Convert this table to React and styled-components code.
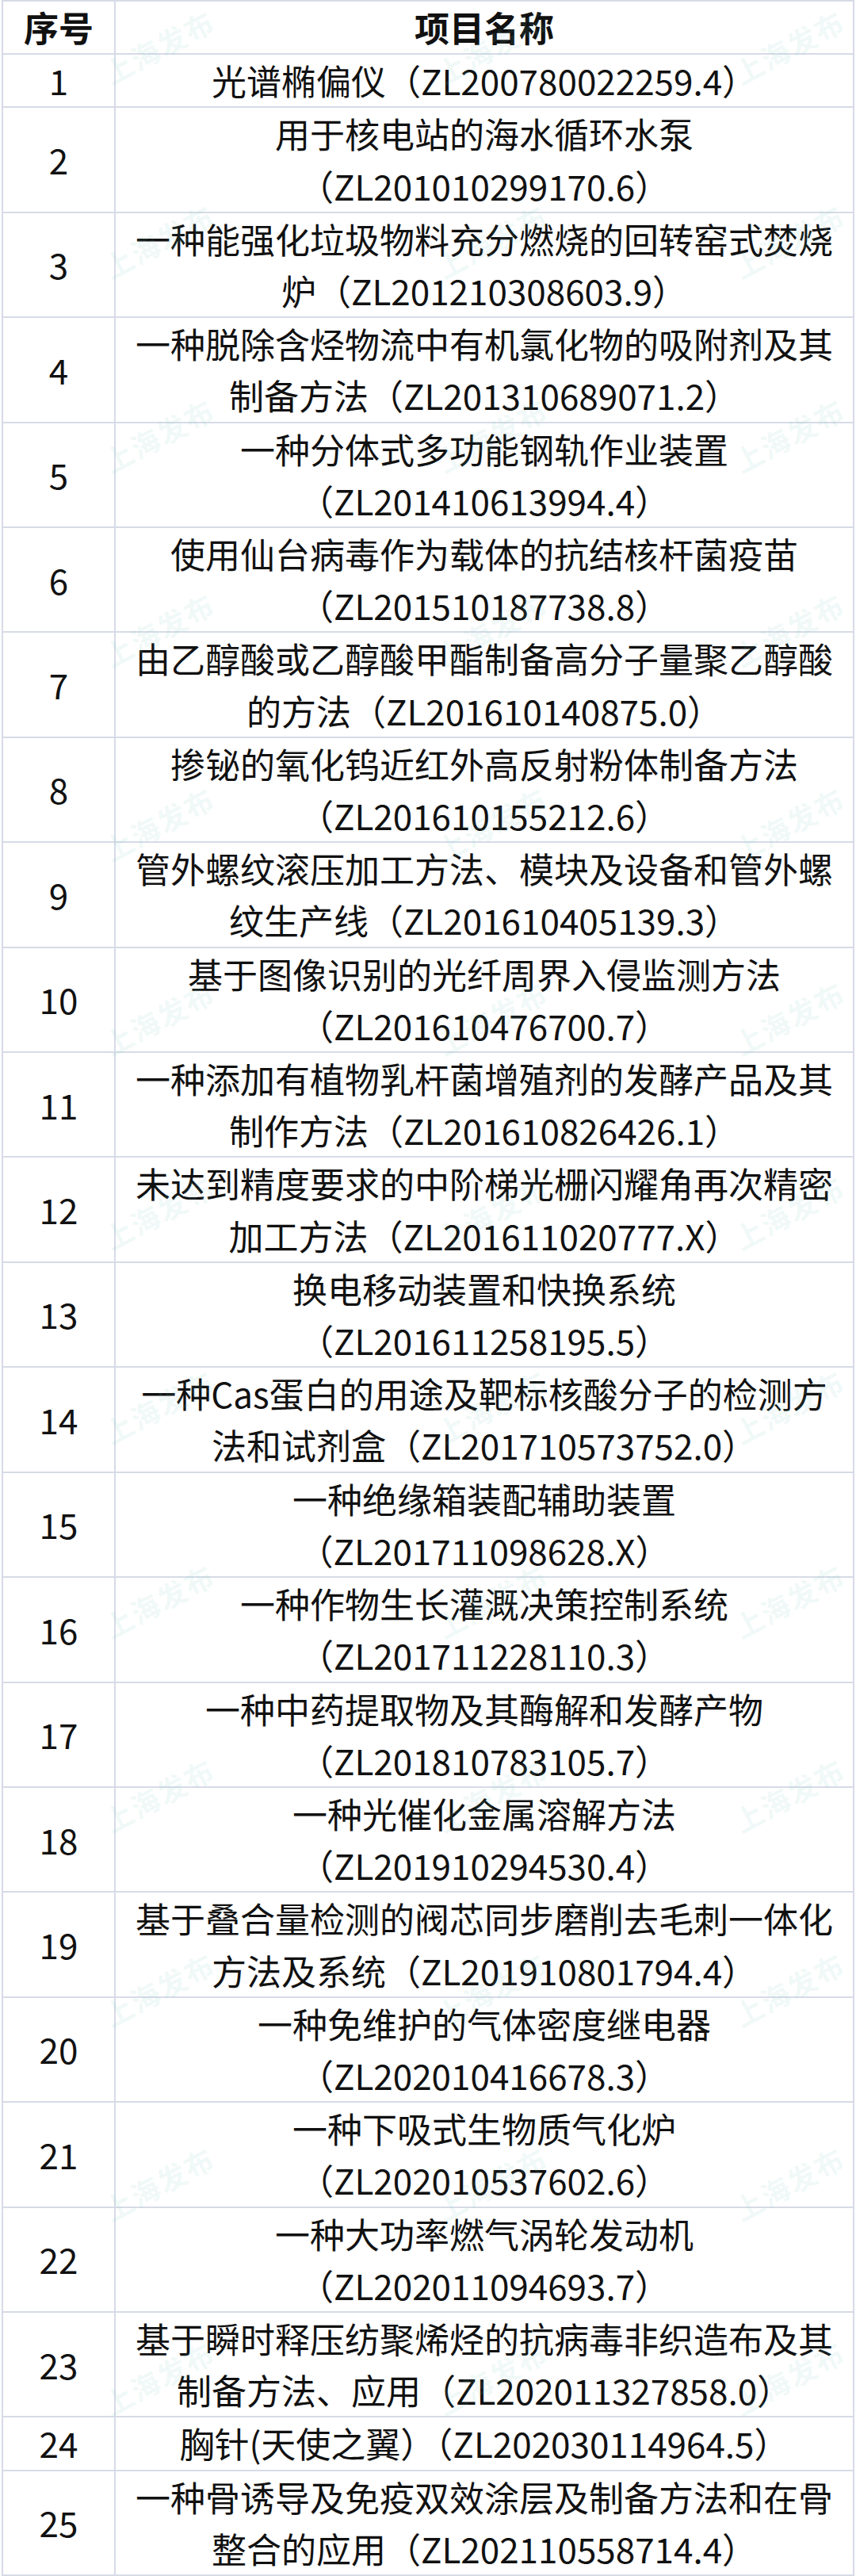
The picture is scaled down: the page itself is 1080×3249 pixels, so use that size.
import React from 'react';
import styled, { createGlobalStyle } from 'styled-components';

const GlobalStyle = createGlobalStyle`
  html, body {
    margin: 0;
    padding: 0;
    background: #ffffff;
  }
  body {
    font-family: "Noto Sans CJK SC", "Noto Sans", sans-serif;
    color: #111111;
  }
`;

const Page = styled.div`
  position: relative;
  padding: 0 2px;
  background: #ffffff;
`;

const Table = styled.div`
  display: grid;
  grid-template-columns: 140px 1fr;
  gap: 2px;
  background: #d6dbe6;
  border: 2px solid #d6dbe6;
`;

const Cell = styled.div`
  background: #ffffff;
  display: flex;
  flex-direction: column;
  align-items: center;
  justify-content: center;
  text-align: center;
  font-size: 44px;
  line-height: 65.2px;
  font-weight: ${p => (p.$head ? 700 : 400)};
  white-space: nowrap;
`;

const Line = styled.span`
  display: block;
`;

const Marks = styled.div`
  position: absolute;
  inset: 0;
  overflow: hidden;
  pointer-events: none;
`;

const Mark = styled.span`
  position: absolute;
  transform: translate(-50%, -50%) rotate(-28deg);
  font-family: "Noto Sans CJK SC", sans-serif;
  font-size: 36px;
  line-height: 42px;
  font-weight: 700;
  letter-spacing: 2px;
  color: rgba(110, 200, 190, 0.11);
  white-space: nowrap;
`;

const rows = [
  ['光谱椭偏仪（ZL200780022259.4）'],
  ['用于核电站的海水循环水泵', '（ZL201010299170.6）'],
  ['一种能强化垃圾物料充分燃烧的回转窑式焚烧', '炉（ZL201210308603.9）'],
  ['一种脱除含烃物流中有机氯化物的吸附剂及其', '制备方法（ZL201310689071.2）'],
  ['一种分体式多功能钢轨作业装置', '（ZL201410613994.4）'],
  ['使用仙台病毒作为载体的抗结核杆菌疫苗', '（ZL201510187738.8）'],
  ['由乙醇酸或乙醇酸甲酯制备高分子量聚乙醇酸', '的方法（ZL201610140875.0）'],
  ['掺铋的氧化钨近红外高反射粉体制备方法', '（ZL201610155212.6）'],
  ['管外螺纹滚压加工方法、模块及设备和管外螺', '纹生产线（ZL201610405139.3）'],
  ['基于图像识别的光纤周界入侵监测方法', '（ZL201610476700.7）'],
  ['一种添加有植物乳杆菌增殖剂的发酵产品及其', '制作方法（ZL201610826426.1）'],
  ['未达到精度要求的中阶梯光栅闪耀角再次精密', '加工方法（ZL201611020777.X）'],
  ['换电移动装置和快换系统', '（ZL201611258195.5）'],
  ['一种Cas蛋白的用途及靶标核酸分子的检测方', '法和试剂盒（ZL201710573752.0）'],
  ['一种绝缘箱装配辅助装置', '（ZL201711098628.X）'],
  ['一种作物生长灌溉决策控制系统', '（ZL201711228110.3）'],
  ['一种中药提取物及其酶解和发酵产物', '（ZL201810783105.7）'],
  ['一种光催化金属溶解方法', '（ZL201910294530.4）'],
  ['基于叠合量检测的阀芯同步磨削去毛刺一体化', '方法及系统（ZL201910801794.4）'],
  ['一种免维护的气体密度继电器', '（ZL202010416678.3）'],
  ['一种下吸式生物质气化炉', '（ZL202010537602.6）'],
  ['一种大功率燃气涡轮发动机', '（ZL202011094693.7）'],
  ['基于瞬时释压纺聚烯烃的抗病毒非织造布及其', '制备方法、应用（ZL202011327858.0）'],
  ['胸针(天使之翼）（ZL202030114964.5）'],
  ['一种骨诱导及免疫双效涂层及制备方法和在骨', '整合的应用（ZL202110558714.4）'],
];

// faint "上海发布" watermark tiled over the table
const markSpots = [];
for (let r = 0; r < 14; r++) {
  for (const x of [200, 620, 995]) {
    const y = 58 + r * 245;
    if (y < 3190) markSpots.push({ x, y });
  }
}

export default function App() {
  return (
    <Page>
      <GlobalStyle />
      <Table>
        <Cell $head>序号</Cell>
        <Cell $head>项目名称</Cell>
        {rows.map((lines, i) => (
          <React.Fragment key={i}>
            <Cell>{i + 1}</Cell>
            <Cell>
              {lines.map((t, j) => (
                <Line key={j}>{t}</Line>
              ))}
            </Cell>
          </React.Fragment>
        ))}
      </Table>
      <Marks>
        {markSpots.map((m, i) => (
          <Mark key={i} style={{ left: m.x, top: m.y }}>上海发布</Mark>
        ))}
      </Marks>
    </Page>
  );
}
